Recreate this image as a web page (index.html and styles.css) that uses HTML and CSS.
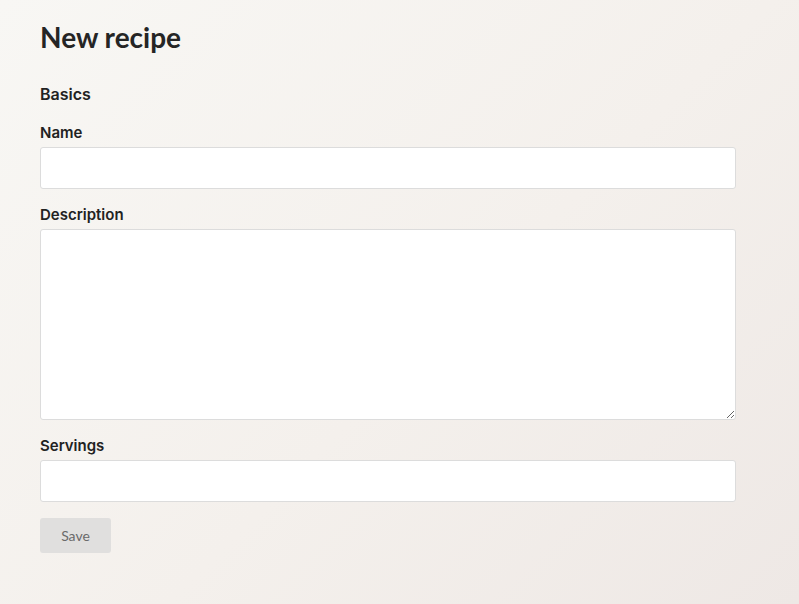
FILE: index.html
```html
<!DOCTYPE html>
<html lang="en">
<head>
<meta charset="utf-8">
<title>New recipe</title>
<link rel="stylesheet" href="styles.css">
</head>
<body>
<main class="page">
  <h1 class="title">New recipe</h1>
  <form class="form">
    <h2 class="section">Basics</h2>
    <div class="field">
      <label class="label" for="name">Name</label>
      <input class="input" id="name" type="text">
    </div>
    <div class="field">
      <label class="label" for="desc">Description</label>
      <textarea class="textarea" id="desc"></textarea>
    </div>
    <div class="field">
      <label class="label" for="serv">Servings</label>
      <input class="input" id="serv" type="text">
    </div>
    <div class="actions">
      <button class="btn" type="button" disabled>Save</button>
    </div>
  </form>
</main>
</body>
</html>
```
FILE: styles.css
```css
html, body {
  margin: 0;
  height: 100%;
}
body {
  background: linear-gradient(135deg, #f8f7f4 0%, #f4f0ec 55%, #eee8e5 100%);
  font-family: Lato, "Noto Sans", sans-serif;
  color: #222;
}
.page {
  padding: 20px 40px 0 40px;
  width: 696px;
}
.title {
  margin: 0;
  font-size: 28px;
  font-weight: 700;
  line-height: 34px;
  color: #252525;
}
.form {
  display: flex;
  flex-direction: column;
}
.section {
  margin: 30px 0 0 0;
  font-family: Inter, "Noto Sans", sans-serif;
  font-size: 16px;
  font-weight: 600;
  line-height: 20px;
  color: #222;
}
.field {
  display: flex;
  flex-direction: column;
  gap: 4px;
  margin-top: 19px;
}
.field + .field {
  margin-top: 16px;
}
.label {
  font-family: Inter, "Noto Sans", sans-serif;
  font-size: 15px;
  font-weight: 600;
  line-height: 20px;
  color: #222;
}
.input, .textarea {
  box-sizing: border-box;
  width: 696px;
  border: 1px solid #dcdcdc;
  border-radius: 3px;
  background: #fff;
  font-family: inherit;
  font-size: 14px;
  margin: 0;
  padding: 8px 10px;
}
.input {
  height: 42px;
}
.textarea {
  height: 191px;
  resize: vertical;
  display: block;
}
.actions {
  margin-top: 16px;
}
.btn {
  width: 71px;
  height: 35px;
  border: none;
  border-radius: 3px;
  background: #e0dfde;
  color: #6a6a6a;
  font-family: inherit;
  font-size: 14px;
  padding: 0;
}
```
